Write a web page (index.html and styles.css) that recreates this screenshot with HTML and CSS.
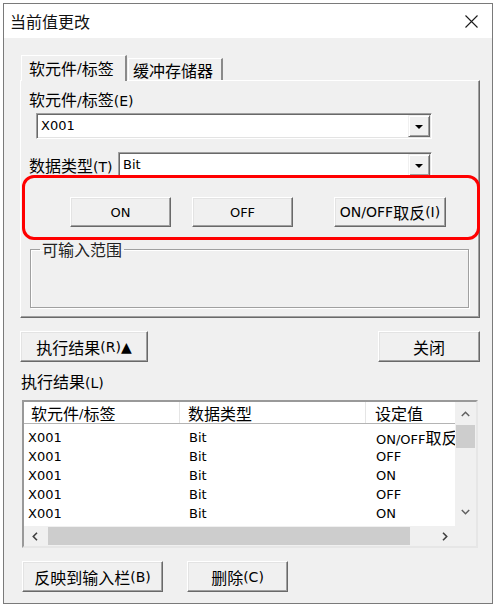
FILE: index.html
```html
<!DOCTYPE html>
<html lang="zh-CN">
<head>
<meta charset="utf-8">
<title>当前值更改</title>
<link rel="stylesheet" href="styles.css">
</head>
<body>
<div class="window">
  <header class="titlebar">
    <span class="title">当前值更改</span>
    <svg class="close" viewBox="0 0 13 13" width="13" height="13" aria-hidden="true"><path d="M0.5 0.5L12.5 12.5M12.5 0.5L0.5 12.5" stroke="#1a1a1a" stroke-width="1.1"/></svg>
  </header>
  <main class="client">
    <div class="tabs">
      <div class="tab tab-active"><span class="zh">软元件</span>/<span class="zh">标签</span></div>
      <div class="tab tab-idle"><span class="zh">缓冲存储器</span></div>
    </div>
    <section class="panel">
      <div class="field-label device-label"><span class="zh">软元件</span>/<span class="zh">标签</span>(E)</div>
      <div class="combo combo-device">
        <span class="combo-value">X001</span>
        <span class="combo-drop"><i class="caret"></i></span>
      </div>
      <div class="type-row">
        <span class="field-label type-label"><span class="zh">数据类型</span>(T)</span>
        <div class="combo combo-type">
          <span class="combo-value">Bit</span>
          <span class="combo-drop"><i class="caret"></i></span>
        </div>
      </div>
      <div class="highlight">
        <button class="btn btn-on">ON</button>
        <button class="btn btn-off">OFF</button>
        <button class="btn btn-toggle">ON/OFF<span class="zh">取反</span>(I)</button>
      </div>
      <fieldset class="range"><legend class="range-legend"><span class="zh">可输入范围</span></legend></fieldset>
    </section>

    <div class="action-row">
      <button class="btn btn-result"><span class="zh">执行结果</span>(R)▲</button>
      <button class="btn btn-close"><span class="zh">关闭</span></button>
    </div>

    <div class="field-label result-label"><span class="zh">执行结果</span>(L)</div>

    <div class="list">
      <div class="list-view">
        <div class="list-head">
          <div class="hcol col-1"><span class="zh">软元件</span>/<span class="zh">标签</span></div>
          <div class="hcol col-2"><span class="zh">数据类型</span></div>
          <div class="hcol col-3"><span class="zh">设定值</span></div>
        </div>
        <div class="list-body">
          <div class="list-row"><span class="cell col-1">X001</span><span class="cell col-2">Bit</span><span class="cell col-3">ON/OFF<span class="zh">取反</span></span></div>
          <div class="list-row"><span class="cell col-1">X001</span><span class="cell col-2">Bit</span><span class="cell col-3">OFF</span></div>
          <div class="list-row"><span class="cell col-1">X001</span><span class="cell col-2">Bit</span><span class="cell col-3">ON</span></div>
          <div class="list-row"><span class="cell col-1">X001</span><span class="cell col-2">Bit</span><span class="cell col-3">OFF</span></div>
          <div class="list-row"><span class="cell col-1">X001</span><span class="cell col-2">Bit</span><span class="cell col-3">ON</span></div>
        </div>
      </div>
      <div class="vscroll">
        <span class="sb-btn sb-up"><svg width="9" height="6" viewBox="0 0 9 6"><path d="M0.8 5L4.5 1.3L8.2 5" fill="none" stroke="#606060" stroke-width="1.5"/></svg></span>
        <span class="vthumb"></span>
        <span class="sb-btn sb-down"><svg width="9" height="6" viewBox="0 0 9 6"><path d="M0.8 1L4.5 4.7L8.2 1" fill="none" stroke="#606060" stroke-width="1.5"/></svg></span>
      </div>
      <div class="hscroll">
        <span class="sb-btn sb-left"><svg width="6" height="9" viewBox="0 0 6 9"><path d="M5 0.8L1.3 4.5L5 8.2" fill="none" stroke="#404040" stroke-width="1.6"/></svg></span>
        <span class="hthumb"></span>
        <span class="sb-btn sb-right"><svg width="6" height="9" viewBox="0 0 6 9"><path d="M1 0.8L4.7 4.5L1 8.2" fill="none" stroke="#404040" stroke-width="1.6"/></svg></span>
      </div>
      <div class="corner"></div>
    </div>

    <div class="bottom-row">
      <button class="btn btn-reflect"><span class="zh">反映到输入栏</span>(B)</button>
      <button class="btn btn-delete"><span class="zh">删除</span>(C)</button>
    </div>
  </main>
</div>
</body>
</html>
```

FILE: styles.css
```css
* { box-sizing: border-box; }

html, body {
  margin: 0;
  padding: 0;
  background: #ffffff;
}

body {
  font-family: "DejaVu Sans", "Noto Sans CJK SC", sans-serif;
  font-size: 13px;
  color: #000;
}

.zh {
  font-family: "Noto Sans CJK SC", sans-serif;
  font-size: 16px;
}

.window {
  margin: 3px 0 0 3px;
  width: 490px;
  height: 601px;
  border: 1px solid #7a7a7a;
  background: #f0f0f0;
  display: flex;
  flex-direction: column;
}

.titlebar {
  flex: none;
  height: 34px;
  background: #ffffff;
  display: flex;
  align-items: center;
  justify-content: space-between;
  padding: 0 14px 0 6px;
}

.title {
  font-family: "Noto Sans CJK SC", sans-serif;
  font-size: 16px;
  line-height: 20px;
  color: #111;
}

.close { display: block; }

.client {
  padding: 17px 0 0 16px;
}

/* Tabs */
.tabs {
  display: flex;
  align-items: flex-end;
  height: 25px;
  padding-left: 1px;
  position: relative;
  z-index: 1;
}

.tab {
  display: flex;
  align-items: center;
  background: #f0f0f0;
  border-style: solid;
  border-width: 1px 2px 0 1px;
  border-color: #ffffff #8a8a8a transparent #ffffff;
  line-height: 20px;
  white-space: nowrap;
  font-size: 14px;
}

.tab-active {
  width: 106px;
  height: 26px;
  margin-bottom: -1px;
  padding: 0 0 2px 7px;
}

.tab-idle {
  width: 95px;
  height: 22px;
  margin-left: 1px;
  padding: 0 0 0 4px;
}

/* Panel */
.panel {
  width: 460px;
  height: 238px;
  border-style: solid;
  border-width: 1px;
  border-color: #ffffff #696969 #696969 #ffffff;
  box-shadow: inset -1px -1px 0 #a0a0a0;
  display: flex;
  flex-direction: column;
  align-items: flex-start;
}

.field-label {
  height: 20px;
  line-height: 20px;
  white-space: nowrap;
  font-size: 14px;
}

.device-label {
  margin: 8px 0 0 8px;
}

.combo {
  display: flex;
  height: 26px;
  background: #ffffff;
  border: 1px solid;
  border-color: #a0a0a0 #ffffff #ffffff #a0a0a0;
  padding: 1px;
  box-shadow: inset 1px 1px 0 #696969, inset -1px -1px 0 #e3e3e3;
}

.combo-device {
  width: 396px;
  margin: 4px 0 0 15px;
}

.combo-value {
  flex: 1;
  padding-left: 3px;
  line-height: 22px;
}

.combo-drop {
  width: 22px;
  flex: none;
  display: flex;
  align-items: center;
  justify-content: center;
  background: #f0f0f0;
  border: 1px solid;
  border-color: #f0f0f0 #696969 #696969 #f0f0f0;
  box-shadow: inset 1px 1px 0 #ffffff, inset -1px -1px 0 #a0a0a0;
}

.caret {
  display: block;
  width: 0;
  height: 0;
  border-left: 4px solid transparent;
  border-right: 4px solid transparent;
  border-top: 4px solid #000;
  margin-top: 1px;
}

.type-row {
  display: flex;
  align-items: center;
  height: 26px;
  margin: 13px 0 0 8px;
}

.type-label {
  width: 89px;
}

.combo-type {
  width: 314px;
}

/* Highlight annotation */
.highlight {
  position: relative;
  width: 458px;
  height: 65px;
  margin: -3px 0 0 1px;
  border: 3px solid #ff0000;
  border-radius: 12px;
  display: flex;
  align-items: flex-start;
  padding: 19px 0 0 45px;
}

/* Buttons */
.btn {
  font: inherit;
  color: #000;
  background: #f0f0f0;
  border: 1px solid;
  border-color: #ffffff #696969 #696969 #ffffff;
  box-shadow: inset -1px -1px 0 #a0a0a0, inset 1px 1px 0 #e3e3e3;
  padding: 0;
  margin: 0;
  white-space: nowrap;
  display: flex;
  align-items: center;
  justify-content: center;
}

.btn-on { width: 101px; height: 30px; }
.btn-off { width: 101px; height: 30px; margin-left: 21px; }
.btn-toggle { width: 112px; height: 30px; margin-left: 41px; font-size: 14px; }

/* Range group */
.range {
  margin: 1px 0 0 9px;
  width: 439px;
  height: 67px;
  padding: 0;
  min-inline-size: 0;
  border: 1px solid #a0a0a0;
  box-shadow: 1px 1px 0 #ffffff, inset 1px 1px 0 #ffffff;
}

.range-legend {
  margin-left: 9px;
  padding: 0 2px;
  line-height: 16px;
}

.range-legend .zh {
  display: block;
  line-height: 16px;
  color: #222;
}

/* Action row */
.action-row {
  width: 460px;
  display: flex;
  justify-content: space-between;
  margin-top: 13px;
}

.btn-result { width: 128px; height: 31px; font-size: 14px; }
.btn-close { width: 102px; height: 31px; }

.result-label {
  margin-top: 9px;
  padding-left: 1px;
}

/* List */
.list {
  width: 456px;
  height: 148px;
  margin: 9px 0 0 2px;
  border: 2px solid;
  border-color: #999999 #e6e6e6 #e6e6e6 #999999;
  display: grid;
  grid-template-columns: 431px 21px;
  grid-template-rows: 124px 20px;
}

.list-view {
  background: #ffffff;
}

.list-head {
  display: flex;
  height: 22px;
  border-bottom: 1px solid #b4b4b4;
  background: #ffffff;
}

.hcol {
  height: 21px;
  display: flex;
  align-items: center;
  padding-top: 2px;
  border-right: 1px solid #e5e5e5;
  white-space: nowrap;
}

.hcol .zh {
  line-height: 17px;
}

.col-1 { width: 156px; padding-left: 7px; }
.col-2 { width: 186px; padding-left: 8px; }
.col-3 { width: 89px; padding-left: 9px; border-right: 0; }

.list-body {
  padding-top: 4px;
}

.list-row {
  display: flex;
  height: 19px;
  align-items: center;
}

.cell {
  white-space: nowrap;
  overflow: hidden;
  line-height: 19px;
  height: 19px;
}

.list-row .col-1 { padding-left: 4px; }
.list-row .col-2 { padding-left: 9px; }
.list-row .col-3 { padding-left: 10px; }

.vscroll {
  background: #f0f0f0;
  display: flex;
  flex-direction: column;
  align-items: center;
}

.sb-btn {
  display: flex;
  align-items: center;
  justify-content: center;
  flex: none;
}

.sb-up { height: 23px; width: 21px; }
.vthumb { width: 19px; height: 23px; background: #cdcdcd; flex: none; }
.sb-down { height: 24px; width: 21px; margin-top: auto; padding-bottom: 4px; }

.hscroll {
  background: #f0f0f0;
  display: flex;
  align-items: center;
}

.sb-left { width: 21px; height: 20px; }
.hthumb { width: 362px; height: 18px; margin-left: 3px; background: #cdcdcd; }
.sb-right { width: 21px; height: 20px; margin-left: auto; }

.corner {
  background: #f0f0f0;
}

/* Bottom row */
.bottom-row {
  display: flex;
  gap: 24px;
  margin: 13px 0 0 2px;
  font-size: 14px;
}

.btn-reflect { width: 141px; height: 31px; }
.btn-delete { width: 101px; height: 31px; }
```
